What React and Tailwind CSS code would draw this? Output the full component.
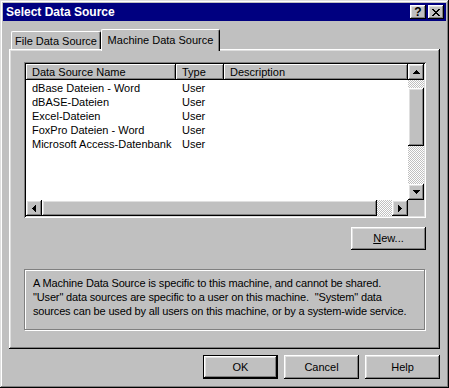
const RAISED = "shadow-[inset_-1px_-1px_0_#000,inset_1px_1px_0_#fff,inset_-2px_-2px_0_#808080,inset_2px_2px_0_#dfdfdf]";
const CHECK = "bg-[repeating-conic-gradient(#ffffff_0_25%,#c0c0c0_0_50%)] bg-size-[2px_2px]";

function Arrow({ dir }) {
  const rows = {
    up: [[3, 0, 1], [2, 1, 3], [1, 2, 5], [0, 3, 7]],
    down: [[0, 0, 7], [1, 1, 5], [2, 2, 3], [3, 3, 1]],
  };
  if (dir === "up" || dir === "down") {
    return (
      <svg width="7" height="4" viewBox="0 0 7 4" shapeRendering="crispEdges">
        {rows[dir].map(([x, y, w], i) => (
          <rect key={i} x={x} y={y} width={w} height="1" fill="#000" />
        ))}
      </svg>
    );
  }
  const cols = dir === "left"
    ? [[0, 3, 1], [1, 2, 3], [2, 1, 5], [3, 0, 7]]
    : [[0, 0, 7], [1, 1, 5], [2, 2, 3], [3, 3, 1]];
  return (
    <svg width="4" height="7" viewBox="0 0 4 7" shapeRendering="crispEdges">
      {cols.map(([x, y, h], i) => (
        <rect key={i} x={x} y={y} width="1" height={h} fill="#000" />
      ))}
    </svg>
  );
}

function SBtn({ dir }) {
  return (
    <div className={`w-[16px] h-[16px] shrink-0 bg-[#c0c0c0] flex items-center justify-center ${RAISED}`}>
      <Arrow dir={dir} />
    </div>
  );
}

const rows = [
  "dBase Dateien - Word",
  "dBASE-Dateien",
  "Excel-Dateien",
  "FoxPro Dateien - Word",
  "Microsoft Access-Datenbank",
];

export default function App() {
  return (
    <div className="w-[449px] h-[388px] bg-[#c0c0c0] p-[3px] flex flex-col shadow-[inset_-1px_-1px_0_#000,inset_1px_1px_0_#dfdfdf,inset_-2px_-2px_0_#808080,inset_2px_2px_0_#fff] font-['Liberation_Sans',Arial,sans-serif] text-[11px] text-black overflow-hidden">
      {/* Title bar */}
      <div className="h-[18px] bg-[#000080] flex items-center pl-[3px] pr-[2px] shrink-0">
        <span className="text-white font-bold text-[12px] leading-[18px]">Select Data Source</span>
        <div className="ml-auto flex gap-[2px]">
          <div className={`w-[16px] h-[14px] bg-[#c0c0c0] flex items-center justify-center font-bold text-[12px] leading-none ${RAISED}`}>?</div>
          <div className={`w-[16px] h-[14px] bg-[#c0c0c0] flex items-center justify-center ${RAISED}`}>
            <svg width="8" height="7" viewBox="0 0 8 7" shapeRendering="crispEdges">
              <path d="M0 0h2v1h-2zM6 0h2v1h-2zM1 1h2v1h-2zM5 1h2v1h-2zM2 2h4v1h-4zM3 3h2v1h-2zM2 4h4v1h-4zM1 5h2v1h-2zM5 5h2v1h-2zM0 6h2v1h-2zM6 6h2v1h-2z" fill="#000" />
            </svg>
          </div>
        </div>
      </div>

      {/* Tabs */}
      <div className="mt-[8px] ml-[6px] h-[20px] flex items-end shrink-0">
        <div className="ml-[2px] w-[90px] h-[18px] border-l border-t border-white border-r border-r-black rounded-tl-[2px] rounded-tr-[2px] shadow-[inset_-1px_0_0_#808080] flex items-center justify-center pt-[1px]">
          File Data Source
        </div>
        <div className="relative z-10 -mb-[2px] w-[119px] h-[22px] bg-[#c0c0c0] border-l border-t border-white border-r border-r-black rounded-tl-[2px] rounded-tr-[2px] shadow-[inset_-1px_0_0_#808080] flex items-start justify-center pt-[2px]">
          Machine Data Source
        </div>
      </div>

      {/* Panel */}
      <div className="ml-[6px] w-[431px] h-[300px] shrink-0 pl-[15px] pt-[13px] flex flex-col shadow-[inset_-1px_-1px_0_#000,inset_1px_1px_0_#fff,inset_-2px_-2px_0_#808080,inset_2px_2px_0_#dfdfdf]">
        {/* List view */}
        <div className="w-[402px] h-[156px] p-[2px] bg-white flex flex-col shadow-[inset_1px_1px_0_#808080,inset_-1px_-1px_0_#fff,inset_2px_2px_0_#000,inset_-2px_-2px_0_#dfdfdf]">
          <div className="flex h-[136px]">
            <div className="w-[382px] flex flex-col">
              <div className="flex h-[16px] bg-[#c0c0c0]">
                <div className="w-[150px] pl-[6px] leading-[16px] shadow-[inset_-1px_-1px_0_#000,inset_1px_1px_0_#fff,inset_-2px_-2px_0_#808080]">Data Source Name</div>
                <div className="w-[48px] pl-[6px] leading-[16px] shadow-[inset_-1px_-1px_0_#000,inset_1px_1px_0_#fff,inset_-2px_-2px_0_#808080]">Type</div>
                <div className="w-[184px] pl-[6px] leading-[16px] shadow-[inset_-1px_-1px_0_#000,inset_1px_1px_0_#fff,inset_-2px_-2px_0_#808080]">Description</div>
              </div>
              <div className="mt-[1px] flex flex-col">
                {rows.map((r) => (
                  <div key={r} className="flex h-[14px] leading-[14px]">
                    <div className="w-[150px] pl-[6px] whitespace-nowrap">{r}</div>
                    <div className="w-[48px] pl-[6px]">User</div>
                  </div>
                ))}
              </div>
            </div>
            <div className="w-[16px] flex flex-col">
              <SBtn dir="up" />
              <div className={`h-[8px] ${CHECK}`} />
              <div className={`h-[58px] bg-[#c0c0c0] ${RAISED}`} />
              <div className={`flex-1 ${CHECK}`} />
              <SBtn dir="down" />
            </div>
          </div>
          <div className="flex h-[16px]">
            <SBtn dir="left" />
            <div className={`w-[335px] bg-[#c0c0c0] ${RAISED}`} />
            <div className={`flex-1 ${CHECK}`} />
            <SBtn dir="right" />
            <div className="w-[16px] bg-[#c0c0c0]" />
          </div>
        </div>

        {/* New button */}
        <div className="w-[402px] mt-[9px] flex justify-end">
          <div className={`w-[75px] h-[23px] bg-[#c0c0c0] flex items-center justify-center ${RAISED}`}>
            <span><span className="underline">N</span>ew...</span>
          </div>
        </div>

        {/* Group box */}
        <div className="mt-[19px] w-[401px] h-[61px] border border-[#808080] shadow-[1px_1px_0_#fff,inset_1px_1px_0_#fff] pl-[8px] pt-[6px] leading-[14px] tracking-[-0.15px] whitespace-nowrap">
          <div>A Machine Data Source is specific to this machine, and cannot be shared.</div>
          <div>"User" data sources are specific to a user on this machine.&nbsp; "System" data</div>
          <div>sources can be used by all users on this machine, or by a system-wide service.</div>
        </div>
      </div>

      {/* Bottom buttons */}
      <div className="ml-[6px] w-[431px] mt-[6px] flex justify-end gap-[6px]">
        <div className="w-[75px] h-[24px] border border-black bg-[#c0c0c0] flex items-center justify-center shadow-[inset_-1px_-1px_0_#000,inset_1px_1px_0_#fff,inset_-2px_-2px_0_#808080,inset_2px_2px_0_#dfdfdf]">OK</div>
        <div className={`w-[75px] h-[24px] bg-[#c0c0c0] flex items-center justify-center ${RAISED}`}>Cancel</div>
        <div className={`w-[75px] h-[24px] bg-[#c0c0c0] flex items-center justify-center ${RAISED}`}>Help</div>
      </div>
    </div>
  );
}
